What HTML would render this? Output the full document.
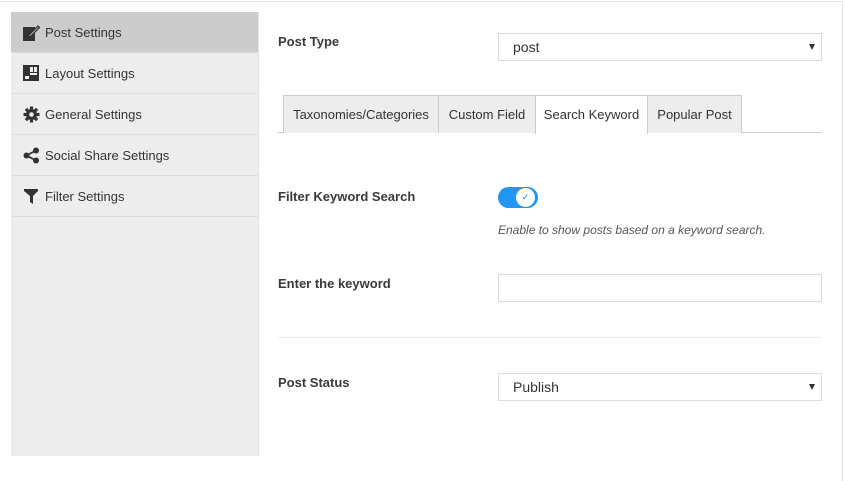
<!DOCTYPE html>
<html><head><style>
*{box-sizing:border-box;margin:0;padding:0}
body{width:845px;height:467px;background:#fff;font-family:"Liberation Sans",sans-serif;color:#333;position:relative;overflow:hidden}
.frame{position:absolute;left:-2px;top:1px;width:845px;height:480px;border-top:1px solid #e5e5e5;border-right:1px solid #e5e5e5}
.side{position:absolute;left:11px;top:12px;width:248px;height:444px;background:#ededed;border-right:1px solid #e3e3e3}
.item{height:41px;border-bottom:1px solid #ddd;display:flex;align-items:center;font-size:13px;color:#333;padding-left:12px}
.item.act{background:#ccc;border-bottom:1px solid #ddd}
.item svg{width:17px;height:17px;margin-right:5px;flex:none}
.abs{position:absolute}
.lbl{font-size:13px;font-weight:bold;color:#3a3a3a}
.box{border:1px solid #ddd;background:#fff}
.sel{font-size:14px;color:#333;padding-left:14px;line-height:26px}
.arr{position:absolute;right:6px;top:10px;width:0;height:0;border-left:3.5px solid transparent;border-right:3.5px solid transparent;border-top:6px solid #333}
.tab{position:absolute;top:95px;height:38px;background:#ededed;border:1px solid #ccc;border-bottom:none;font-size:13px;color:#333;line-height:37px;text-align:center}
</style></head><body>
<div class="frame"></div>
<div class="side">
<div class="item act"><svg viewBox="0 0 17 17"><rect x="0" y="3" width="12" height="14" fill="#333"/><path d="M6 11 L15 2 L16.5 3.5 L7.5 12.5 L5.5 13 Z" fill="#ccc" stroke="#333" stroke-width="1.3"/></svg>Post Settings</div>
<div class="item"><svg viewBox="0 0 17 17"><rect x="0" y="0" width="16" height="16" fill="#333"/><rect x="7" y="2" width="3" height="5" fill="#ededed"/><rect x="11" y="2" width="3" height="5" fill="#ededed"/><rect x="7" y="8" width="7" height="2" fill="#ededed"/><rect x="2" y="11" width="4" height="3" fill="#ededed"/></svg>Layout Settings</div>
<div class="item"><svg viewBox="0 0 17 17"><g fill="#333" transform="translate(8.5 8.5)"><circle r="5.5"/><rect x="-1.6" y="-8" width="3.2" height="16"/><rect x="-1.6" y="-8" width="3.2" height="16" transform="rotate(45)"/><rect x="-1.6" y="-8" width="3.2" height="16" transform="rotate(90)"/><rect x="-1.6" y="-8" width="3.2" height="16" transform="rotate(135)"/><circle r="2.3" fill="#ededed"/></g></svg>General Settings</div>
<div class="item"><svg viewBox="0 0 17 17"><g fill="#333"><circle cx="13" cy="3.5" r="3"/><circle cx="3.5" cy="8.5" r="3"/><circle cx="13" cy="13.5" r="3"/></g><path d="M13 3.5 L3.5 8.5 L13 13.5" stroke="#333" stroke-width="1.8" fill="none"/></svg>Social Share Settings</div>
<div class="item"><svg viewBox="0 0 17 17"><path d="M1 1 H15 V3 L10 8 V16 L7 14 V8 L1 3 Z" fill="#333"/></svg>Filter Settings</div>
</div>

<div class="abs lbl" style="left:278px;top:34px">Post Type</div>
<div class="abs box sel" style="left:498px;top:33px;width:324px;height:28px">post<span class="arr"></span></div>

<div class="abs" style="left:278px;top:132px;width:544px;height:1px;background:#ccc"></div>
<div class="tab" style="left:283px;width:156px">Taxonomies/Categories</div>
<div class="tab" style="left:438px;width:98px">Custom Field</div>
<div class="tab" style="left:535px;width:113px;background:#fff;height:39px">Search Keyword</div>
<div class="tab" style="left:647px;width:95px">Popular Post</div>

<div class="abs lbl" style="left:278px;top:189px">Filter Keyword Search</div>
<div class="abs" style="left:498px;top:187px;width:40px;height:21px;border-radius:11px;background:#2196f3"></div>
<div class="abs" style="left:516px;top:188px;width:19px;height:19px;border-radius:50%;background:#fff;font-size:9px;color:#1976d2;text-align:center;line-height:19px">✓</div>
<div class="abs" style="left:498px;top:223px;font-size:12px;font-style:italic;color:#555">Enable to show posts based on a keyword search.</div>

<div class="abs lbl" style="left:278px;top:276px">Enter the keyword</div>
<div class="abs box" style="left:498px;top:274px;width:324px;height:28px"></div>

<div class="abs" style="left:278px;top:337px;width:544px;height:1px;background:#eaeaea"></div>

<div class="abs lbl" style="left:278px;top:375px">Post Status</div>
<div class="abs box sel" style="left:498px;top:373px;width:324px;height:28px">Publish<span class="arr"></span></div>
</body></html>
